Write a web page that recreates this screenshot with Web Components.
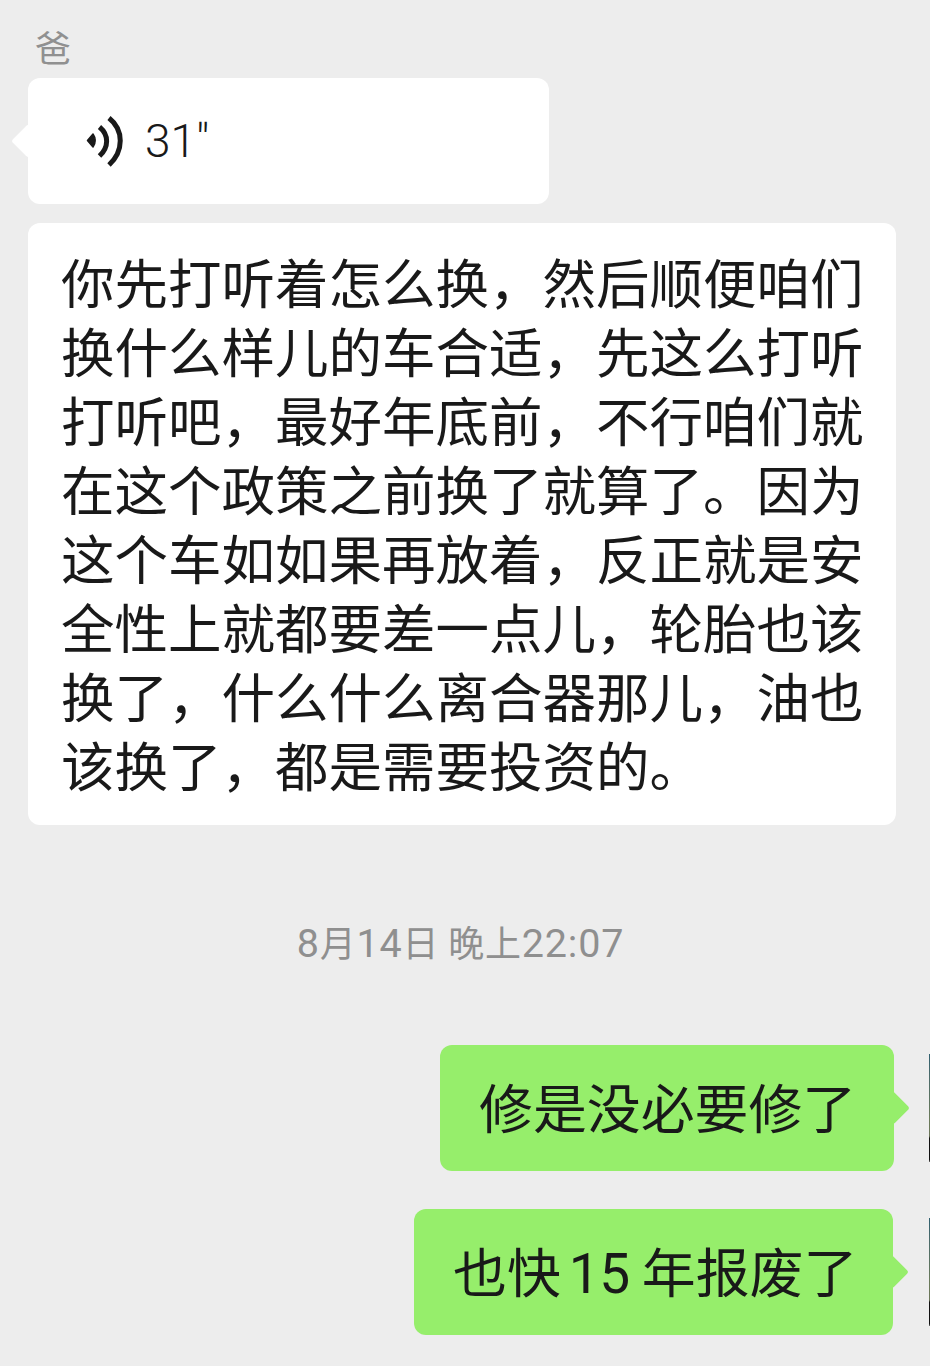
<!DOCTYPE html>
<html lang="zh-CN"><head><meta charset="utf-8">
<style>
html,body{margin:0;padding:0;background:#ededed;}
body{width:930px;height:1366px;overflow:hidden;font-family:"Noto Sans CJK SC","Noto Sans",sans-serif;}
chat-page{display:block}
time-stamp span{font-family:"Noto Sans CJK SC",sans-serif;font-size:36px}
.num{font-family:Roboto,sans-serif;font-size:55px;letter-spacing:-.5px;margin-left:-4px}
</style></head><body>
<chat-page>
  <sender-name>爸</sender-name>
  <chat-bubble side="left" style="--w:521px;--h:126px;--mt:9px"><voice-msg>31"</voice-msg></chat-bubble>
  <chat-bubble side="plain" style="--w:868px;--mt:19px;--pad:23px 32px 27px 33px;--fs:53.5px">你先打听着怎么换，然后顺便咱们换什么样儿的车合适，先这么打听打听吧，最好年底前，不行咱们就在这个政策之前换了就算了。因为这个车如如果再放着，反正就是安全性上就都要差一点儿，轮胎也该换了，什么什么离合器那儿，油也该换了，都是需要投资的。</chat-bubble>
  <time-stamp>8<span>月</span>14<span>日 晚上</span>22:07</time-stamp>
  <chat-bubble side="right" style="--mt:0;--pad:0 39px 0 39px;--h:126px;--w:454px;--end:35px;--fs:53.9px">修是没必要修了</chat-bubble>
  <chat-bubble side="right" style="--mt:38px;--pad:0 39px 0 39px;--h:126px;--w:479px;--end:36px;--fs:53.9px">也快 <span class="num">15</span> 年报废了</chat-bubble>
</chat-page>
<script>
function def(name, css, html){
  customElements.define(name, class extends HTMLElement{
    constructor(){super();const s=this.attachShadow({mode:'open'});s.innerHTML='<style>'+css+'</style>'+html;}
  });
}
def('sender-name',':host{display:block;height:69px;padding:26px 0 0 35px;box-sizing:border-box;font-size:36px;line-height:40px;color:#909090}','<slot></slot>');
def('time-stamp',':host{display:block;margin-top:92px;height:128px;text-align:center;font-family:Roboto,sans-serif;font-size:39.5px;line-height:48px;letter-spacing:.8px;color:#8f8f8f;padding-right:9px;box-sizing:border-box}','<slot></slot>');
def('voice-msg',':host{display:flex;align-items:center;height:126px;font-family:Roboto,"Liberation Sans",sans-serif;font-size:46px;font-weight:300;color:#191919}svg{width:38px;height:52px;margin:0 21px 0 58px;flex:none}',
 '<svg viewBox="0 0 38 52"><path d="M1.5 25.5 L7 19 Q11.5 25.5 7 32 Z" fill="#191919" stroke="#191919" stroke-width="1.5" stroke-linejoin="round"/><path d="M13.5 12 C23 20 23 32 13.5 41" fill="none" stroke="#191919" stroke-width="5"/><path d="M23 3 C38 15 38 36 23 50" fill="none" stroke="#191919" stroke-width="5"/></svg><slot></slot>');
def('chat-bubble',
 `:host{display:flex;margin-top:var(--mt,0);align-items:center}
  :host([side=left]),:host([side=plain]){padding-left:28px}
  :host([side=right]){justify-content:flex-end}
  .b{position:relative;box-sizing:border-box;width:var(--w,auto);min-height:var(--h,0);padding:var(--pad,0);border-radius:12px;background:#fff;color:#191919;font-size:var(--fs,53.4px);line-height:69px}
  :host([side=right]) .b{background:#96ee6b;white-space:pre;height:var(--h);margin-right:var(--end);line-height:calc(var(--h) - 4px)}
  .t{position:absolute;top:50%;width:24px;height:24px;background:inherit;transform:translateY(-50%) rotate(45deg);border-radius:3px}
  :host([side=left]) .t{left:-12px}
  :host([side=right]) .t{right:-11px}
  :host([side=plain]) .t{display:none}
  .a{display:none}
  :host([side=right]) .a{display:block;flex:none;width:1px;height:108px;background:linear-gradient(#2f5f6f 0,#4a6a6a 20%,#6a7a5a 60%,#6a7458 76%,#111 78%,#111 98%,#777 100%)}`,
 '<div class="b"><span class="t"></span><slot></slot></div><div class="a"></div>');
</script>
</body></html>
